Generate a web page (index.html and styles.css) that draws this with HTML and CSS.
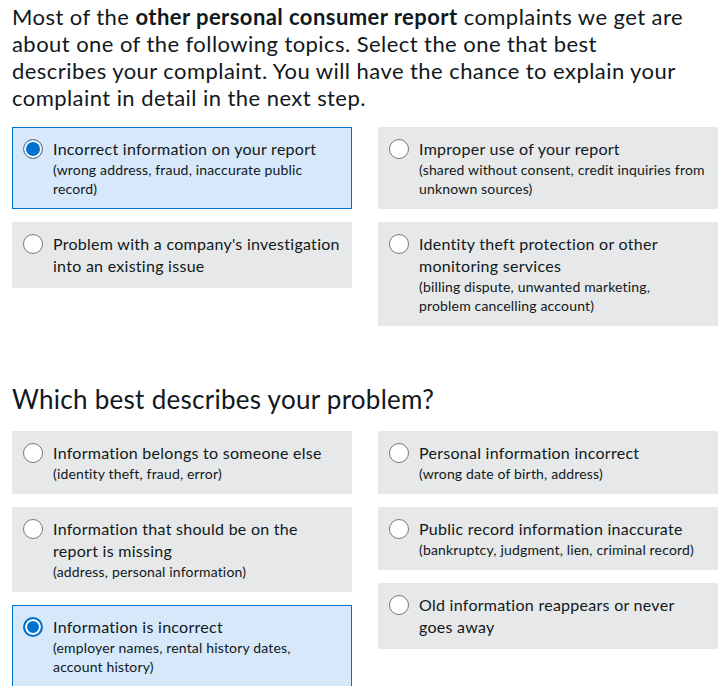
FILE: index.html
```html
<!DOCTYPE html>
<html lang="en">
<head>
    <meta charset="UTF-8"/>
    <meta name="viewport" content="width=device-width,initial-scale=1"/>
    <title>Submit a complaint</title>
    <link rel="stylesheet" href="styles.css">
</head>
<body>
<div class="page">
    <p class="intro">Most of the <b>other personal consumer report</b> complaints we get are about one of the following topics. Select the one that best describes your complaint. You will have the chance to explain your complaint in detail in the next step.</p>

    <div class="choices">
        <div class="col">
            <label class="choice selected">
                <span class="radio"></span>
                <span class="text">
                    <span class="title">Incorrect information on your report</span>
                    <span class="help">(wrong address, fraud, inaccurate public record)</span>
                </span>
            </label>
            <label class="choice">
                <span class="radio"></span>
                <span class="text">
                    <span class="title">Problem with a company's investigation into an existing issue</span>
                </span>
            </label>
        </div>
        <div class="col">
            <label class="choice">
                <span class="radio"></span>
                <span class="text">
                    <span class="title">Improper use of your report</span>
                    <span class="help">(shared without consent, credit inquiries from unknown sources)</span>
                </span>
            </label>
            <label class="choice">
                <span class="radio"></span>
                <span class="text">
                    <span class="title">Identity theft protection or other monitoring services</span>
                    <span class="help">(billing dispute, unwanted marketing, <span class="nowrap">problem cancelling account)</span></span>
                </span>
            </label>
        </div>
    </div>

    <h2>Which best describes your problem?</h2>

    <div class="choices">
        <div class="col">
            <label class="choice">
                <span class="radio"></span>
                <span class="text">
                    <span class="title">Information belongs to someone else</span>
                    <span class="help">(identity theft, fraud, error)</span>
                </span>
            </label>
            <label class="choice">
                <span class="radio"></span>
                <span class="text">
                    <span class="title">Information that should be on the report is missing</span>
                    <span class="help">(address, personal information)</span>
                </span>
            </label>
            <label class="choice selected focused">
                <span class="radio"></span>
                <span class="text">
                    <span class="title">Information is incorrect</span>
                    <span class="help">(employer names, rental history dates, account history)</span>
                </span>
            </label>
        </div>
        <div class="col">
            <label class="choice">
                <span class="radio"></span>
                <span class="text">
                    <span class="title">Personal information incorrect</span>
                    <span class="help">(wrong date of birth, address)</span>
                </span>
            </label>
            <label class="choice">
                <span class="radio"></span>
                <span class="text">
                    <span class="title">Public record information inaccurate</span>
                    <span class="help">(bankruptcy, judgment, lien, criminal record)</span>
                </span>
            </label>
            <label class="choice">
                <span class="radio"></span>
                <span class="text">
                    <span class="title">Old information reappears or never goes away</span>
                </span>
            </label>
        </div>
    </div>
</div>
</body>
</html>
```

FILE: styles.css
```css
body { margin: 0; font-family: Lato, "Noto Sans", sans-serif; color: #101820; background: #fff; letter-spacing: .017em; }
.page { padding: 3px 12px 0; }
.intro { margin: 0; max-width: 684px; font-size: 22px; line-height: 27px; letter-spacing: .02em; }
.intro b { font-weight: 700; }
.choices { display: grid; grid-template-columns: 340px 340px; column-gap: 26px; margin-top: 17px; align-items: start; }
.col { display: flex; flex-direction: column; gap: 15px; }
.choice { display: flex; gap: 10px; padding: 10px 8px 10px 10px; background: #e7e8e9; border: 1px solid #e7e8e9; margin: -1px 0; cursor: pointer; }
.choice.selected { background: #d6e8fa; border-color: #0072ce; }
.radio { flex: none; width: 18px; height: 18px; margin-top: 1px; border-radius: 50%; background: #fff; border: 1px solid #75787b; }
.selected .radio { background: #0072ce; box-shadow: inset 0 0 0 2px #fff; }
.focused .radio { border: 2px solid #0072ce; width: 16px; height: 16px; }
.text { display: flex; flex-direction: column; }
.title { font-size: 16px; line-height: 22px; }
.help { font-size: 14px; line-height: 19px; letter-spacing: .012em; }
.nowrap { white-space: nowrap; }
h2 { margin: 58px 0 0; font-size: 26px; font-weight: 400; line-height: 32px; }
h2 + .choices { margin-top: 17px; }
```
